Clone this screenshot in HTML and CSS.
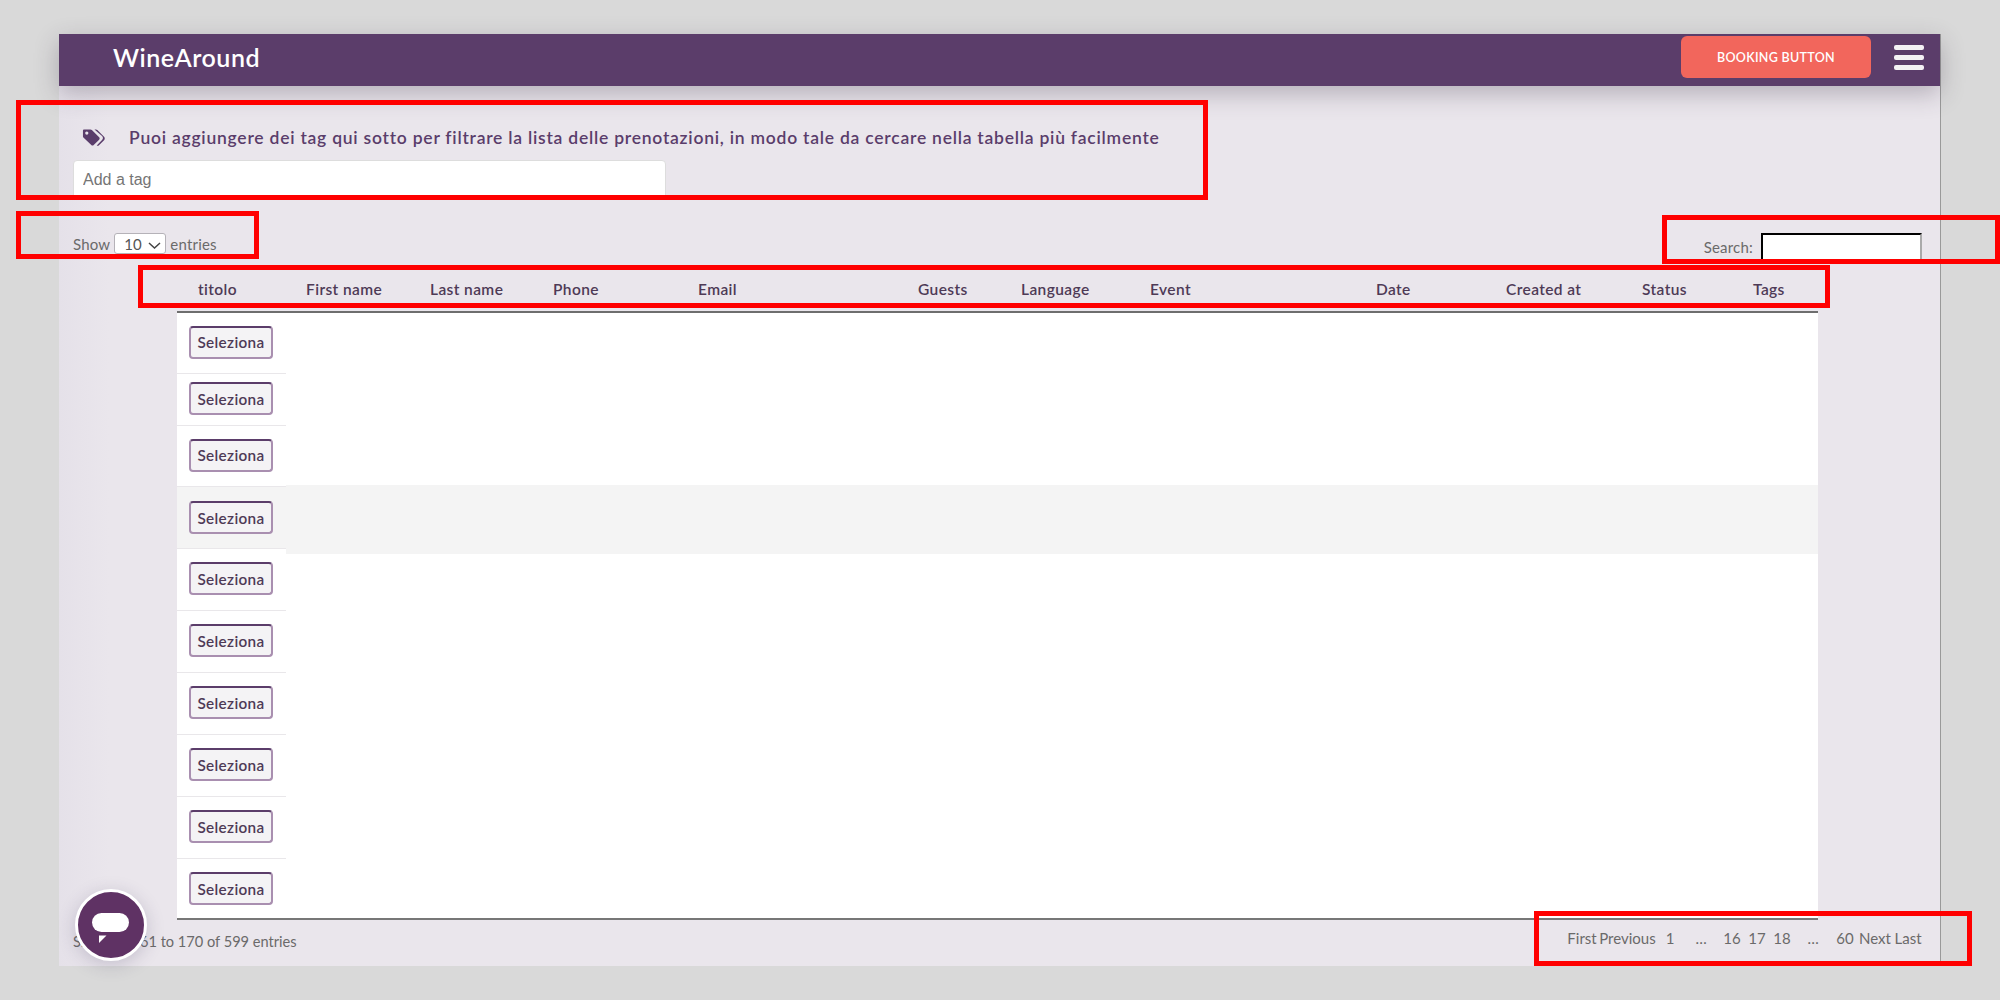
FILE: index.html
```html
<!DOCTYPE html>
<html lang="it">
<head>
<meta charset="utf-8">
<title>WineAround</title>
<link rel="stylesheet" href="styles.css">
</head>
<body>
<div class="panel">
  <header class="topbar">
    <span class="brand">WineAround</span>
    <button class="booking">BOOKING BUTTON</button>
    <div class="burger"><i></i><i></i><i></i></div>
  </header>
  <section class="tag-section">
    <div class="tag-title">
      <svg class="tag-icon" viewBox="0 0 24 20"><path fill="#5a3d6b" fill-rule="evenodd" d="M1 2.200C1 1.500 1.500 1 2.200 1h6.600c.6 0 1.100.2 1.500.6l7.600 7.600c.7.700.7 1.800 0 2.500l-5.700 5.700c-.7.700-1.800.7-2.500 0L2 10C1.300 9.500 1 9 1 8.400V2.200zM5 3.200a1.700 1.700 0 1 0 0 3.400 1.700 1.700 0 0 0 0-3.400z"/><path fill="#5a3d6b" d="M13 1h1.500c.6 0 1.100.2 1.500.6l7 7.100c1 1 1 2.600 0 3.600l-5.300 5.300c-.7.700-1.700.7-2.300.1l5.500-5.500c1.300-1.300 1.300-2.900 0-4.200L13 1z"/></svg>
      <span>Puoi aggiungere dei tag qui sotto per filtrare la lista delle prenotazioni, in modo tale da cercare nella tabella più facilmente</span>
    </div>
    <input class="tag-input" type="text" placeholder="Add a tag">
  </section>
  <section class="controls">
    <label class="length">Show <select class="length-select"><option>10</option></select> entries</label>
    <label class="search">Search: <input class="search-input" type="text"></label>
  </section>
  <div class="table-head">
    <span>titolo</span><span>First name</span><span>Last name</span><span>Phone</span><span>Email</span><span>Guests</span><span>Language</span><span>Event</span><span>Date</span><span>Created at</span><span>Status</span><span>Tags</span>
  </div>
  <div class="table-body">
    <div class="fixed-col">
      <div class="cell c1"><button class="pick">Seleziona</button></div>
      <div class="cell c2"><button class="pick">Seleziona</button></div>
      <div class="cell c3"><button class="pick">Seleziona</button></div>
      <div class="cell c4"><button class="pick">Seleziona</button></div>
      <div class="cell"><button class="pick">Seleziona</button></div>
      <div class="cell"><button class="pick">Seleziona</button></div>
      <div class="cell"><button class="pick">Seleziona</button></div>
      <div class="cell"><button class="pick">Seleziona</button></div>
      <div class="cell"><button class="pick">Seleziona</button></div>
      <div class="cell last"><button class="pick">Seleziona</button></div>
    </div>
    <div class="data-col"><div class="hover-row"></div></div>
  </div>
  <footer class="table-foot">
    <span class="info">Showing 161 to 170 of 599 entries</span>
    <nav class="pager">
      <a>First</a><a>Previous</a><a>1</a><a class="dots">…</a><a>16</a><a>17</a><a>18</a><a class="dots">…</a><a>60</a><a>Next</a><a>Last</a>
    </nav>
  </footer>
</div>
<div class="chat">
  <svg viewBox="0 0 38 32" class="chat-icon"><rect x="0" y="0" width="37" height="19" rx="9.500" fill="#fff"/><path d="M7 22.500h7.500L7 30z" fill="#fff"/></svg>
</div>
<div class="mark m1"></div>
<div class="mark m2"></div>
<div class="mark m3"></div>
<div class="mark m4"></div>
<div class="mark m5"></div>
</body>
</html>
```
FILE: styles.css
```css
* { box-sizing: border-box; }
html, body { margin: 0; height: 100%; }
body {
  background: #d9d9d9;
  padding: 34px 59px 34px 59px;
  font-family: Lato, "Open Sans", sans-serif;
  color: #6a6a6a;
  overflow: hidden;
}
.panel {
  height: 932px;
  background: linear-gradient(90deg, #e5e1e9 0, #eae6ec 50px);
  border-right: 1px solid #999;
  display: flex;
  flex-direction: column;
}
.topbar {
  height: 52px;
  flex: none;
  background: #5b3d6a;
  box-shadow: 0 8px 24px rgba(60, 50, 70, .3);
  display: flex;
  align-items: center;
  padding: 0 16px 0 54px;
  position: relative;
}
.brand {
  color: #fff;
  font-size: 25px;
  font-weight: 600;
  letter-spacing: .55px;
  margin-bottom: 6px;
}
.booking {
  margin-left: auto;
  width: 190px;
  height: 42px;
  margin-bottom: 6px;
  border: 0;
  border-radius: 6px;
  background: #f2665c;
  color: #fff;
  font: 600 12.500px Lato, sans-serif;
  letter-spacing: .3px;
}
.burger {
  width: 30px;
  margin-left: 23px;
  margin-bottom: 6px;
  display: flex;
  flex-direction: column;
  gap: 5px;
}
.burger i { display: block; height: 5px; border-radius: 2px; background: #f4f2f5; }
.tag-section { padding: 39px 0 0 14px; }
.tag-title {
  display: flex;
  align-items: center;
  color: #5a3d6b;
  font-size: 17.500px;
  font-weight: 600;
  letter-spacing: .76px;
  height: 24px;
}
.tag-icon { width: 23px; height: 20px; margin: 2px 24px 0 9px; flex: none; }
.tag-input {
  display: block;
  margin-top: 11px;
  width: 593px;
  height: 40px;
  padding: 0 9px;
  background: #fff;
  border: 1px solid #ddd;
  border-radius: 4px;
  font: 16px "Liberation Sans", sans-serif;
  color: #555;
}
.tag-input::placeholder { color: #757575; }
.controls {
  margin-top: 33px;
  padding: 0 18px 0 14px;
  display: flex;
  justify-content: space-between;
  align-items: flex-start;
  height: 28px;
  font-size: 15px;
  letter-spacing: .2px;
}
.length { display: flex; align-items: center; gap: 4px; height: 21px; }
.length-select {
  appearance: none;
  width: 52px;
  height: 21px;
  font: 15px Lato, sans-serif;
  color: #555;
  background: #fff url("data:image/svg+xml,%3Csvg xmlns='http://www.w3.org/2000/svg' width='13' height='7'%3E%3Cpath d='M1 1l5.500 5L12 1' fill='none' stroke='%23444' stroke-width='1.500'/%3E%3C/svg%3E") no-repeat 33px 8px;
  border: 1px solid #b5b2b8;
  border-radius: 3px;
  padding-left: 9px;
}
.search { display: flex; align-items: center; gap: 8px; height: 28px; }
.search-input {
  width: 161px;
  height: 28px;
  background: #fff;
  border: 2px inset #777;
  border-color: #333 #aaa #aaa #333;
  padding: 0;
}
.table-head {
  margin-top: 11px;
  height: 39px;
  padding: 8px 0 0 139px;
  display: grid;
  grid-template-columns: 108px 124px 123px 145px 220px 103px 129px 226px 130px 136px 111px auto;
  align-items: start;
  font-size: 15.500px;
  line-height: 18px;
  font-weight: 600;
  letter-spacing: .4px;
  color: #4e3a56;
}
.table-body {
  margin: 0 122px 0 118px;
  height: 609px;
  flex: none;
  background: #fff;
  border-top: 2px solid #6e6e6e;
  border-bottom: 2px solid #777;
  display: flex;
}
.fixed-col { width: 109px; flex: none; }
.cell {
  height: 62px;
  display: flex;
  align-items: center;
  padding: 0 0 2px 12px;
  background: #fff;
  border-bottom: 1px solid #e9e7ea;
}
.cell.c1 { height: 61px; }
.cell.c2 { height: 52px; }
.cell.c3 { height: 61px; }
.cell.c4 { background: #f4f4f4; padding-bottom: 0; }
.cell.last { border-bottom: 0; height: 59px; padding-bottom: 0; }
.data-col { flex: 1; }
.hover-row { margin-top: 172px; height: 69px; background: #f4f4f4; }
.pick {
  width: 84px;
  height: 33px;
  padding: 0;
  background: #f4f3f5;
  border: 2px solid #a98fb0;
  border-top-color: #5b3d6a;
  border-radius: 4px;
  color: #4e3a56;
  font: 600 15.300px Lato, sans-serif;
  letter-spacing: .35px;
}
.table-foot {
  padding: 0 15px 0 14px;
  display: flex;
  justify-content: space-between;
  font-size: 15px;
}
.info { margin-top: 13px; font-size: 14.600px; }
.pager {
  margin-top: 6px;
  display: grid;
  grid-template-columns: 32px 59px 26px 36px 26px 24px 26px 36px 28px 32px 34px;
  height: 24px;
  align-items: center;
  text-align: center;
}
.chat {
  position: fixed;
  left: 75px;
  top: 889px;
  width: 72px;
  height: 72px;
  border-radius: 50%;
  background: #5f3264;
  border: 3px solid #fff;
  box-shadow: 0 4px 18px rgba(60, 50, 90, .22);
  display: flex;
  align-items: center;
  justify-content: center;
}
.chat-icon { width: 38px; height: 32px; margin-top: 8px; }
.mark { position: fixed; border: 5px solid #f00; }
.m1 { left: 16px; top: 100px; width: 1192px; height: 100px; }
.m2 { left: 16px; top: 211px; width: 243px; height: 48px; }
.m3 { left: 1662px; top: 215px; width: 338px; height: 49px; }
.m4 { left: 138px; top: 265px; width: 1692px; height: 43px; }
.m5 { left: 1534px; top: 911px; width: 438px; height: 55px; }
```
